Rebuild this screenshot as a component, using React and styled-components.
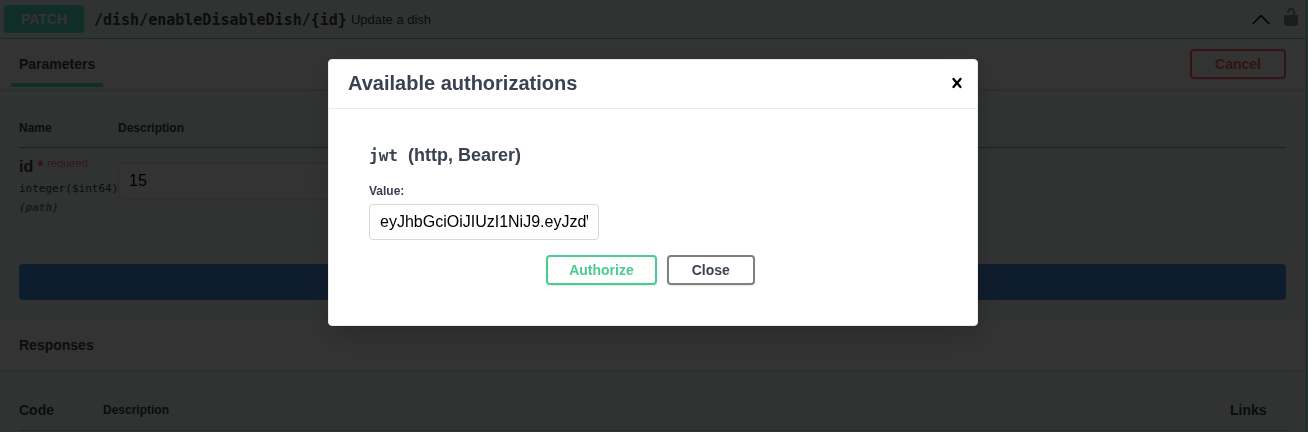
import React from "react";
import styled, { createGlobalStyle } from "styled-components";

const ink = "#3b4151";
const sans = `"Liberation Sans", Arial, sans-serif`;
const mono = `"DejaVu Sans Mono", monospace`;

const GlobalStyle = createGlobalStyle`
  *, *::before, *::after { box-sizing: border-box; }
  body { margin: 0; background: #fff; color: ${ink}; font-family: ${sans}; }
  h2, h3, h4, p { margin: 0; }
  button, input { font-family: inherit; }
`;

const Operation = styled.section`
  margin-right: 1px;
  border-right: 1px solid #50e3c2;
  background: rgba(80, 227, 194, 0.1);
`;

const Summary = styled.header`
  display: flex;
  align-items: center;
  height: 39px;
  padding: 0 5px 0 4px;
  border-bottom: 1px solid #50e3c2;
`;

const Method = styled.span`
  width: 80px;
  border-radius: 3px;
  background: #50e3c2;
  color: #fff;
  font-size: 14px;
  font-weight: 700;
  line-height: 28px;
  text-align: center;
  text-shadow: 0 1px 0 rgba(0, 0, 0, 0.1);
`;

const Path = styled.code`
  padding: 2px 4px 0 10px;
  font-family: ${mono};
  font-size: 15px;
  font-weight: 700;
`;

const SummaryText = styled.span`
  flex: 1;
  font-size: 13px;
`;

const IconButton = styled.button`
  display: flex;
  padding: 0 0 ${(p) => (p.$raised ? 4 : 0)}px;
  margin-left: ${(p) => p.$gap || 0}px;
  border: 0;
  background: none;
  color: #000;
  opacity: ${(p) => (p.$faded ? 0.4 : 1)};
`;

const SectionHeader = styled.div`
  position: relative;
  display: flex;
  align-items: center;
  justify-content: space-between;
  height: 50px;
  padding: 0 20px 0 ${(p) => (p.$tabs ? 11 : 19)}px;
  background: #fff;
  box-shadow: 0 1px 2px rgba(0, 0, 0, 0.1);
`;

const Tab = styled.h4`
  align-self: stretch;
  padding: 0 8px;
  font-size: 14px;
  line-height: 50px;
  background: linear-gradient(#50e3c2, #50e3c2) 0 44px / 100% 4px no-repeat;
`;

const SectionTitle = styled.h4`
  font-size: 14px;
`;

const Button = styled.button`
  height: 30px;
  padding: 0 ${(p) => p.$pad || 23}px;
  border: 2px solid ${(p) => p.$border};
  border-radius: 4px;
  background: transparent;
  color: ${(p) => p.$color || p.$border};
  font-size: 14px;
  font-weight: 700;
  box-shadow: 0 1px 2px rgba(0, 0, 0, 0.1);
`;

const SectionBody = styled.div`
  padding: 20px 20px ${(p) => p.$bottom || 0}px 19px;
`;

const Table = styled.table`
  width: 100%;
  border-collapse: collapse;
  table-layout: fixed;
  td { padding: 0; vertical-align: top; }
`;

const HeadCell = styled.th`
  width: ${(p) => (p.$width ? `${p.$width}px` : "auto")};
  height: ${(p) => p.$height}px;
  padding: 0;
  border-bottom: 1px solid rgba(59, 65, 81, 0.3);
  font-size: ${(p) => p.$size || 12}px;
  font-weight: 700;
  text-align: left;
`;

const ParamName = styled.label`
  display: block;
  padding-top: 10px;
  font-size: 16px;
  font-weight: 700;
  line-height: 18px;
  white-space: nowrap;
`;

const Required = styled.span`
  margin-left: 4px;
  color: rgba(255, 0, 0, 0.6);
  font-size: ${(p) => (p.$star ? 16 : 11)}px;
  font-weight: ${(p) => (p.$star ? 700 : 400)};
  line-height: 10px;
  vertical-align: ${(p) => (p.$star ? "baseline" : "5px")};
`;

const ParamType = styled.div`
  padding-top: ${(p) => (p.$muted ? 4 : 5)}px;
  color: ${(p) => (p.$muted ? "#808080" : ink)};
  font-family: ${mono};
  font-size: 11px;
  font-style: ${(p) => (p.$muted ? "italic" : "normal")};
  font-weight: ${(p) => (p.$muted ? 700 : 400)};
  line-height: 15px;
  white-space: nowrap;
`;

const TextInput = styled.input`
  display: block;
  width: ${(p) => p.$width}px;
  max-width: 100%;
  height: 36px;
  margin-top: ${(p) => p.$top}px;
  padding: 0 10px;
  border: 1px solid #d9d9d9;
  border-radius: 4px;
  background: #fff;
  color: #000;
  font-size: 16px;
`;

const Execute = styled.button`
  display: block;
  width: 100%;
  height: 36px;
  margin-top: 49px;
  border: 0;
  border-radius: 4px;
  background: #4990e2;
`;

const Backdrop = styled.div`
  position: fixed;
  inset: 0;
  display: flex;
  align-items: flex-start;
  justify-content: center;
  padding: 59px 2px 0 0;
  background: rgba(0, 0, 0, 0.8);
`;

const Modal = styled.div`
  width: 100%;
  max-width: 650px;
  border: 1px solid #ebebeb;
  border-radius: 4px;
  background: #fff;
  box-shadow: 0 10px 30px rgba(0, 0, 0, 0.2);
`;

const ModalHeader = styled.header`
  display: flex;
  align-items: center;
  justify-content: space-between;
  height: 49px;
  padding: 0 10px 2px 19px;
  border-bottom: 1px solid #ebebeb;
`;

const ModalTitle = styled.h3`
  font-size: 20px;
`;

const ModalBody = styled.form`
  padding: 36px 40px 40px;
`;

const SchemeTitle = styled.h4`
  font-size: 18px;
  line-height: 20px;
  code {
    margin-right: 10px;
    font-family: ${mono};
    font-size: 16px;
    font-weight: 700;
  }
`;

const FieldLabel = styled.label`
  display: block;
  margin-top: 17px;
  font-size: 12px;
  font-weight: 700;
  line-height: 16px;
`;

const Actions = styled.div`
  display: flex;
  justify-content: center;
  gap: 10px;
  padding: 15px 5px 0 0;
`;

const Icon = ({ d, size = 20 }) => (
  <svg width={size} height={size} viewBox="0 0 20 20" fill="currentColor" aria-hidden="true">
    <path d={d} />
  </svg>
);

const chevronUp =
  "M17.418 14.908c.272.268.709.268.979 0s.271-.701 0-.969l-7.908-7.83c-.27-.268-.707-.268-.979 0l-7.908 7.83c-.27.268-.27.701 0 .969.271.268.709.268.979 0L10 7.767l7.418 7.141z";
const unlocked =
  "M15.8 8H14V5.6C14 2.703 12.665 1 10 1 7.334 1 6 2.703 6 5.6V6h2v-.801C8 3.754 8.797 3 10 3c1.203 0 2 .754 2 2.199V8H4c-.553 0-1 .646-1 1.199V17c0 .549.428 1.139.951 1.307l1.197.387C5.672 18.861 6.55 19 7.1 19h5.8c.549 0 1.428-.139 1.951-.307l1.196-.387c.524-.167.953-.757.953-1.306V9.199C17 8.646 16.352 8 15.8 8z";
const cross =
  "M14.348 14.849c-.469.469-1.229.469-1.697 0L10 11.819l-2.651 3.029c-.469.469-1.229.469-1.697 0-.469-.469-.469-1.229 0-1.697l2.758-3.15-2.759-3.152c-.469-.469-.469-1.228 0-1.697.469-.469 1.228-.469 1.697 0L10 8.183l2.651-3.031c.469-.469 1.228-.469 1.697 0 .469.469.469 1.229 0 1.697l-2.758 3.152 2.758 3.15c.469.469.469 1.229 0 1.698z";

export default function App() {
  return (
    <>
      <GlobalStyle />
      <Operation>
        <Summary>
          <Method>PATCH</Method>
          <Path>/dish/enableDisableDish/&#123;id&#125;</Path>
          <SummaryText>Update a dish</SummaryText>
          <IconButton type="button" aria-label="Collapse operation">
            <Icon d={chevronUp} />
          </IconButton>
          <IconButton type="button" aria-label="Authorization" $gap={10} $raised $faded>
            <Icon d={unlocked} />
          </IconButton>
        </Summary>

        <SectionHeader $tabs>
          <Tab>Parameters</Tab>
          <Button type="button" $border="#ff6060">Cancel</Button>
        </SectionHeader>
        <SectionBody $bottom={20}>
          <Table>
            <thead>
              <tr>
                <HeadCell $width={99} $height={38}>Name</HeadCell>
                <HeadCell $height={38}>Description</HeadCell>
              </tr>
            </thead>
            <tbody>
              <tr>
                <td>
                  <ParamName htmlFor="param-id">
                    id<Required $star>*</Required>
                    <Required>required</Required>
                  </ParamName>
                  <ParamType>integer($int64)</ParamType>
                  <ParamType $muted>(path)</ParamType>
                </td>
                <td>
                  <TextInput id="param-id" defaultValue="15" $width={340} $top={15} />
                </td>
              </tr>
            </tbody>
          </Table>
          <Execute type="button" aria-label="Execute" />
        </SectionBody>

        <SectionHeader>
          <SectionTitle>Responses</SectionTitle>
        </SectionHeader>
        <SectionBody>
          <Table>
            <thead>
              <tr>
                <HeadCell $width={84} $height={41} $size={14}>Code</HeadCell>
                <HeadCell $height={41}>Description</HeadCell>
                <HeadCell $width={56} $height={41} $size={14}>Links</HeadCell>
              </tr>
            </thead>
          </Table>
        </SectionBody>
      </Operation>

      <Backdrop>
        <Modal role="dialog" aria-modal="true" aria-labelledby="auth-title">
          <ModalHeader>
            <ModalTitle id="auth-title">Available authorizations</ModalTitle>
            <IconButton type="button" aria-label="Close dialog">
              <Icon d={cross} />
            </IconButton>
          </ModalHeader>
          <ModalBody>
            <SchemeTitle>
              <code>jwt</code>(http, Bearer)
            </SchemeTitle>
            <FieldLabel htmlFor="auth-value">Value:</FieldLabel>
            <TextInput id="auth-value" defaultValue="eyJhbGciOiJIUzI1NiJ9.eyJzdWIi" $width={230} $top={5} />
            <Actions>
              <Button type="button" $border="#49cc90" $pad={21}>Authorize</Button>
              <Button type="button" $border="#808080" $color={ink}>Close</Button>
            </Actions>
          </ModalBody>
        </Modal>
      </Backdrop>
    </>
  );
}
